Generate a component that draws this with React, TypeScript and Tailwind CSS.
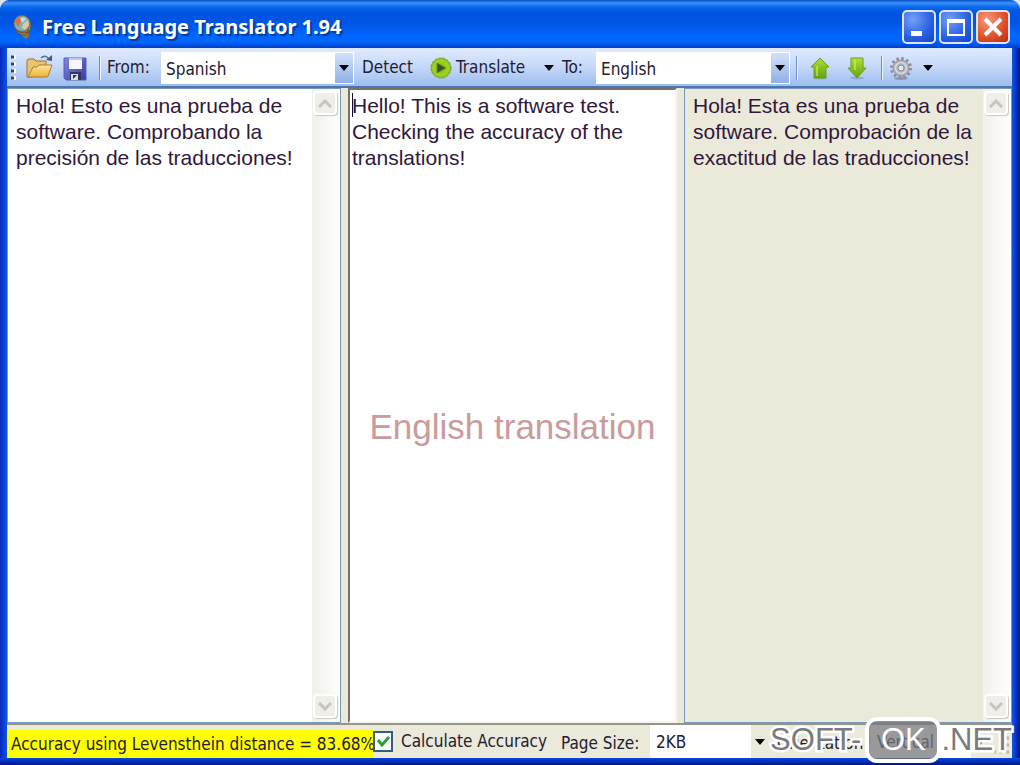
import React from 'react';

const uiFont = 'font-["DejaVu_Sans_Condensed","DejaVu_Sans",sans-serif]';

function Caret() {
  return (
    <svg width="10" height="6" viewBox="0 0 10 6" aria-hidden="true">
      <path d="M0 0h10L5 6z" fill="#050505" />
    </svg>
  );
}

function AppIcon() {
  return (
    <svg width="22" height="26" viewBox="0 0 22 26" aria-hidden="true">
      <path d="M8 17l1 4 5 4 3-3-1-6z" fill="#a8702c" />
      <path d="M3 15q6 6 13 3l1-13q4 7 0 13-3 4-7 3Q5 20 3 15z" fill="#c48a3e" stroke="#5d4c36" />
      <circle cx="10" cy="9.500" r="8" fill="#85aeb0" stroke="#6a6c62" />
      <path d="M3 8q2-6 7-6l2 3-4 4-2 4z" fill="#d7704a" />
      <path d="M11 10l5-4 1 5-4 5-3-2z" fill="#dfc7a4" />
      <path d="M8 4q4-2 6 1l-4 4z" fill="#bcdedd" />
    </svg>
  );
}

function OpenIcon() {
  return (
    <svg width="27" height="26" viewBox="0 0 27 26" aria-hidden="true">
      <defs>
        <linearGradient id="folder" x1="0" y1="0" x2="0" y2="1">
          <stop offset="0" stopColor="#ffe79a" />
          <stop offset="1" stopColor="#eeb233" />
        </linearGradient>
      </defs>
      <path d="M1 22V6q0-2 2-2h5l2 2h10v6L6 22H3z" fill="#ecc470" stroke="#9a762f" />
      <path d="M2 22L7 12h4l2-2h13l-4 11q0 1-2 1H3z" fill="url(#folder)" stroke="#a97d2c" />
      <path d="M15 3q4-4 8 1" fill="none" stroke="#57708f" strokeWidth="1.500" />
      <path d="M20 5l6 1V0z" fill="#405d80" />
    </svg>
  );
}

function SaveIcon() {
  return (
    <svg width="24" height="25" viewBox="0 0 24 25" aria-hidden="true">
      <defs>
        <linearGradient id="disk" x1="0" y1="0" x2="1" y2="1">
          <stop offset="0" stopColor="#8387df" />
          <stop offset="1" stopColor="#353aa5" />
        </linearGradient>
      </defs>
      <path d="M1 2h22v22H3l-2-2z" fill="url(#disk)" stroke="#5a5fb0" />
      <path d="M6 2h13v11H6z" fill="#f5f6ff" />
      <path d="M6 2h13v2H6z" fill="#bfc5ef" />
      <path d="M7 16h11v8H7z" fill="#30375f" />
      <path d="M8 18h7v6H8z" fill="#d9dce5" />
      <path d="M10 19h4l-4 4z" fill="#2b3153" />
    </svg>
  );
}

function PlayIcon() {
  return (
    <svg width="22" height="22" viewBox="0 0 22 22" aria-hidden="true">
      <defs>
        <radialGradient id="play">
          <stop offset="0" stopColor="#86b51d" />
          <stop offset="0.750" stopColor="#a2d522" />
          <stop offset="1" stopColor="#83b520" />
        </radialGradient>
      </defs>
      <circle cx="11" cy="11" r="10" fill="url(#play)" stroke="#729d27" strokeDasharray="3 1" />
      <path d="M7 6l9 5-9 5z" fill="#385617" stroke="#628a1d" />
    </svg>
  );
}

function GreenArrow({ down = false }: { down?: boolean }) {
  return (
    <svg width="20" height="24" viewBox="0 0 20 24" aria-hidden="true">
      <defs>
        <linearGradient id="arrow" x1="0" y1="0" x2="0" y2="1">
          <stop offset="0" stopColor="#b5df35" />
          <stop offset="1" stopColor="#60a50b" />
        </linearGradient>
      </defs>
      <ellipse cx="10" cy="22" rx="7" ry="1.500" fill="#718ba3" opacity=".5" />
      <path
        d={down ? 'M4 2h12v10h3l-9 10-9-10h3z' : 'M10 2l9 9h-3v11H4V11H1z'}
        fill="url(#arrow)"
        stroke="#6a9c20"
        strokeLinejoin="round"
      />
      <path d={down ? 'M8 4v10' : 'M7 10v10'} stroke="#cdea63" strokeWidth="2" opacity=".65" />
    </svg>
  );
}

function GearIcon() {
  return (
    <svg width="24" height="25" viewBox="0 0 24 25" aria-hidden="true">
      <ellipse cx="12" cy="22.500" rx="7" ry="1.500" fill="#6b7a92" opacity=".6" />
      <circle cx="12" cy="12" r="9.500" fill="none" stroke="#8d8d99" strokeWidth="3" strokeDasharray="2.500 2.474" />
      <circle cx="12" cy="12" r="8" fill="#b4b4bf" stroke="#9696a3" />
      <circle cx="12" cy="12" r="5.500" fill="none" stroke="#d8d8df" strokeWidth="1.500" />
      <circle cx="12" cy="12" r="3" fill="#dce8f8" stroke="#888894" />
    </svg>
  );
}

function Separator() {
  return <span className="h-6 w-0.5 shrink-0 border-l border-r border-l-[#6d8fc5] border-r-[#edf4ff]" />;
}

function ToolbarCombo({ id, value, className }: { id: string; value: string; className: string }) {
  return (
    <div className={`grid h-8 shrink-0 grid-cols-[1fr_18px] border border-white bg-white ${className}`}>
      <select
        id={id}
        defaultValue={value}
        className="col-span-2 col-start-1 row-start-1 min-w-0 appearance-none bg-transparent pl-1 pt-1 outline-none"
      >
        <option>English</option>
        <option>Spanish</option>
      </select>
      <span className="pointer-events-none col-start-2 row-start-1 flex items-center justify-center bg-gradient-to-b from-[#d3e2fa] to-[#91b0e6]">
        <Caret />
      </span>
    </div>
  );
}

function ScrollButton({ down = false }: { down?: boolean }) {
  return (
    <button
      type="button"
      aria-label={down ? 'Scroll down' : 'Scroll up'}
      className="flex h-6 w-6 items-center justify-center rounded-sm border-2 border-white bg-[#efeee8] shadow-[1px_1px_1px_#c9c8c0]"
    >
      <svg width="14" height="9" viewBox="0 0 14 9" aria-hidden="true">
        <path d={down ? 'M1 1l6 6 6-6' : 'M1 8l6-6 6 6'} fill="none" stroke="#c6c5be" strokeWidth="3" />
      </svg>
    </button>
  );
}

function ScrollBar() {
  return (
    <div className="flex w-7 shrink-0 flex-col items-center justify-between bg-gradient-to-r from-[#f1f0ea] to-[#fefefd] pb-1 pt-0.5 pr-0.5">
      <ScrollButton />
      <ScrollButton down />
    </div>
  );
}

const paneText =
  'min-w-0 flex-1 resize-none overflow-hidden bg-transparent font-["Liberation_Sans",Arial,sans-serif] text-[21px] leading-[26px] text-[#30183a] outline-none';

const windowButton =
  'flex h-[34px] w-[34px] items-center justify-center rounded-[5px] border-2 border-[#dce6fb]';

const watermarkText = '[-webkit-text-stroke:5px_white] [paint-order:stroke_fill]';

export default function App() {
  return (
    <main className={`relative flex h-screen flex-col overflow-hidden bg-[#d9e2ee] text-[17px] text-[#222032] ${uiFont}`}>
      <div className="flex min-h-0 flex-1 flex-col overflow-hidden rounded-t-[10px] bg-[linear-gradient(90deg,#0927b8,#0b50e4_6px,#0b50e4_calc(100%_-_7px),#00138c)]">
        <header className="flex h-12 shrink-0 items-center bg-[linear-gradient(180deg,#0650c4_0px,#3c91fb_3px,#0869ee_7px,#0054df_13px,#0055e5_23px,#0067ff_36px,#0066fc_42px,#0043cf_47px)] pl-3 pr-2.5 pt-1.5">
          <AppIcon />
          <h1 className='ml-2 font-["Noto_Sans",sans-serif] text-[20px] font-bold leading-7 text-white [text-shadow:2px_2px_1px_#073aa0]'>
            Free Language Translator 1.94
          </h1>
          <div className="ml-auto flex gap-[3px]">
            <button type="button" aria-label="Minimize" className={`${windowButton} bg-[radial-gradient(circle_at_30%_25%,#769ff5,#285fe2_60%,#1545bf)]`}>
              <svg width="26" height="26" viewBox="0 0 26 26" aria-hidden="true"><path d="M5 17h11v5H5z" fill="white" /></svg>
            </button>
            <button type="button" aria-label="Maximize" className={`${windowButton} bg-[radial-gradient(circle_at_30%_25%,#769ff5,#285fe2_60%,#1545bf)]`}>
              <svg width="26" height="26" viewBox="0 0 26 26" aria-hidden="true"><path d="M5 6h16v15H5z" fill="none" stroke="white" strokeWidth="2" /><path d="M4 5h18v4H4z" fill="white" /></svg>
            </button>
            <button type="button" aria-label="Close" className={`${windowButton} bg-[radial-gradient(circle_at_30%_25%,#f49a7a,#e04d28_60%,#b72d09)]`}>
              <svg width="26" height="26" viewBox="0 0 26 26" aria-hidden="true"><path d="M5 5l16 16M21 5L5 21" stroke="white" strokeWidth="4" /></svg>
            </button>
          </div>
        </header>

        <div className="ml-[7px] mr-2 flex min-h-0 flex-1 flex-col bg-[#ebe9da]">
          <div role="toolbar" className="flex h-10 shrink-0 items-center border-b-2 border-[#4c76ad] bg-gradient-to-b from-[#dfeafd] via-[#c5d8f8] to-[#9dbdee] pt-0.5">
            <svg width="5" height="26" viewBox="0 0 5 26" className="ml-1 shrink-0" aria-hidden="true">
              <path d="M1 2h4M1 9h4M1 16h4M1 23h4" stroke="white" strokeWidth="4" />
              <path d="M0 2h3M0 9h3M0 16h3M0 23h3" stroke="#29446f" strokeWidth="3" />
            </svg>
            <button type="button" aria-label="Open" className="ml-2.5"><OpenIcon /></button>
            <button type="button" aria-label="Save" className="ml-2.5"><SaveIcon /></button>
            <span className="ml-3 flex"><Separator /></span>
            <label htmlFor="from" className="ml-1.5 w-[54px] shrink-0 whitespace-nowrap">From:</label>
            <ToolbarCombo id="from" value="Spanish" className="w-[193px]" />
            <button type="button" className="ml-2 w-[60px] text-left">Detect</button>
            <button type="button" className="ml-2 flex w-[98px] items-center gap-1"><PlayIcon />Translate</button>
            <button type="button" aria-label="Translate options" className="ml-4"><Caret /></button>
            <label htmlFor="to" className="ml-2 w-[34px] shrink-0 whitespace-nowrap">To:</label>
            <ToolbarCombo id="to" value="English" className="w-[194px]" />
            <span className="ml-1.5 flex"><Separator /></span>
            <button type="button" aria-label="Move up" className="ml-3"><GreenArrow /></button>
            <button type="button" aria-label="Move down" className="ml-[17px]"><GreenArrow down /></button>
            <span className="ml-3.5 flex"><Separator /></span>
            <button type="button" aria-label="Settings" className="ml-1.5"><GearIcon /></button>
            <button type="button" aria-label="Settings options" className="ml-2.5"><Caret /></button>
          </div>

          <div className="grid min-h-0 flex-1 grid-cols-[334fr_329fr_328fr] gap-[7px]">
            <section className="flex min-w-0 border border-[#7999bb] bg-[#fefefe]">
              <textarea aria-label="Source text" spellCheck={false} className={`${paneText} pl-2 pt-1`} defaultValue="Hola! Esto es una prueba de software. Comprobando la precisión de las traducciones!" />
              <ScrollBar />
            </section>
            <section className="relative flex min-w-0 border-2 border-b-[#f6f5ef] border-l-[#77736b] border-r-[#f6f5ef] border-t-[#77736b] bg-[#fefefe]">
              <textarea aria-label="Translated text" spellCheck={false} className={`${paneText} pl-0.5 pt-[3px]`} defaultValue="Hello! This is a software test. Checking the accuracy of the translations!" />
              <span className="absolute left-0.5 top-[3px] h-6 w-px bg-[#15102a]" />
              <p className='pointer-events-none absolute inset-x-0 top-[53%] -translate-y-1/2 whitespace-nowrap pt-1.5 text-center font-["Liberation_Sans",Arial,sans-serif] text-[35px] leading-10 text-[#ca9b9b]'>
                English translation
              </p>
            </section>
            <section className="flex min-w-0 border border-[#7999bb] bg-[#ebe9da]">
              <textarea aria-label="Back translation" spellCheck={false} className={`${paneText} pl-2 pt-1`} defaultValue="Hola! Esta es una prueba de software. Comprobación de la exactitud de las traducciones!" />
              <ScrollBar />
            </section>
          </div>

          <footer className="flex h-[35px] shrink-0 items-center border-t-2 border-[#969688]">
            <output className="mt-1 h-7 w-[366px] shrink-0 whitespace-nowrap bg-[#ffff00] pl-1 leading-7">
              Accuracy using Levensthein distance = 83.68%
            </output>
            <label className="flex shrink-0 items-center gap-2 whitespace-nowrap">
              <span className="grid h-[21px] w-5">
                <input type="checkbox" defaultChecked className="peer col-start-1 row-start-1 appearance-none border-2 border-[#345d85] bg-white" />
                <svg viewBox="0 0 20 21" className="pointer-events-none invisible z-10 col-start-1 row-start-1 peer-checked:visible" aria-hidden="true">
                  <path d="M5 9l4 5 7-8" fill="none" stroke="#29a22b" strokeWidth="3" />
                </svg>
              </span>
              <span className="w-[160px]">Calculate Accuracy</span>
            </label>
            <label htmlFor="page-size" className="mt-1 w-[89px] shrink-0 whitespace-nowrap">Page Size:</label>
            <div className="grid h-full w-[119px] shrink-0 grid-cols-[1fr_18px] bg-white">
              <select id="page-size" defaultValue="2KB" className="col-span-2 col-start-1 row-start-1 appearance-none bg-transparent pl-1.5 pt-0.5 outline-none">
                <option>1KB</option>
                <option>2KB</option>
              </select>
              <span className="pointer-events-none col-start-2 row-start-1 flex items-center justify-center bg-[#ebe9da]"><Caret /></span>
            </div>
            <label htmlFor="orientation" className="ml-2 mt-1 w-[94px] shrink-0 whitespace-nowrap">Orientation</label>
            <div className="grid h-full w-[118px] shrink-0 grid-cols-[1fr_18px] bg-white">
              <select id="orientation" defaultValue="Vertical" className="col-span-2 col-start-1 row-start-1 appearance-none bg-transparent pl-1.5 pt-0.5 outline-none">
                <option>Vertical</option>
                <option>Horizontal</option>
              </select>
              <span className="pointer-events-none col-start-2 row-start-1 flex items-center justify-center bg-[#ebe9da]"><Caret /></span>
            </div>
            <svg width="18" height="20" viewBox="0 0 18 20" className="ml-auto mt-2 shrink-0" aria-hidden="true">
              <path d="M12 2h3M12 9h3M5 9h3M12 16h3M5 16h3M0 16h2" stroke="#b8b5a4" strokeWidth="3" />
            </svg>
          </footer>
        </div>
        <div className="h-[7px] shrink-0 bg-gradient-to-b from-[#0a49df] to-[#00138c]" />
      </div>

      <div className='pointer-events-none absolute bottom-0.5 right-2 flex items-center font-["Liberation_Sans",Arial,sans-serif] text-[31px] leading-9 text-[#7b7b7b]'>
        <span className={watermarkText}>SOFT-</span>
        <span className="ml-1 flex h-[46px] w-[76px] items-center justify-center rounded-xl border-4 border-white bg-[#77777ac0] text-white">OK</span>
        <span className={watermarkText}>.NET</span>
      </div>
    </main>
  );
}
